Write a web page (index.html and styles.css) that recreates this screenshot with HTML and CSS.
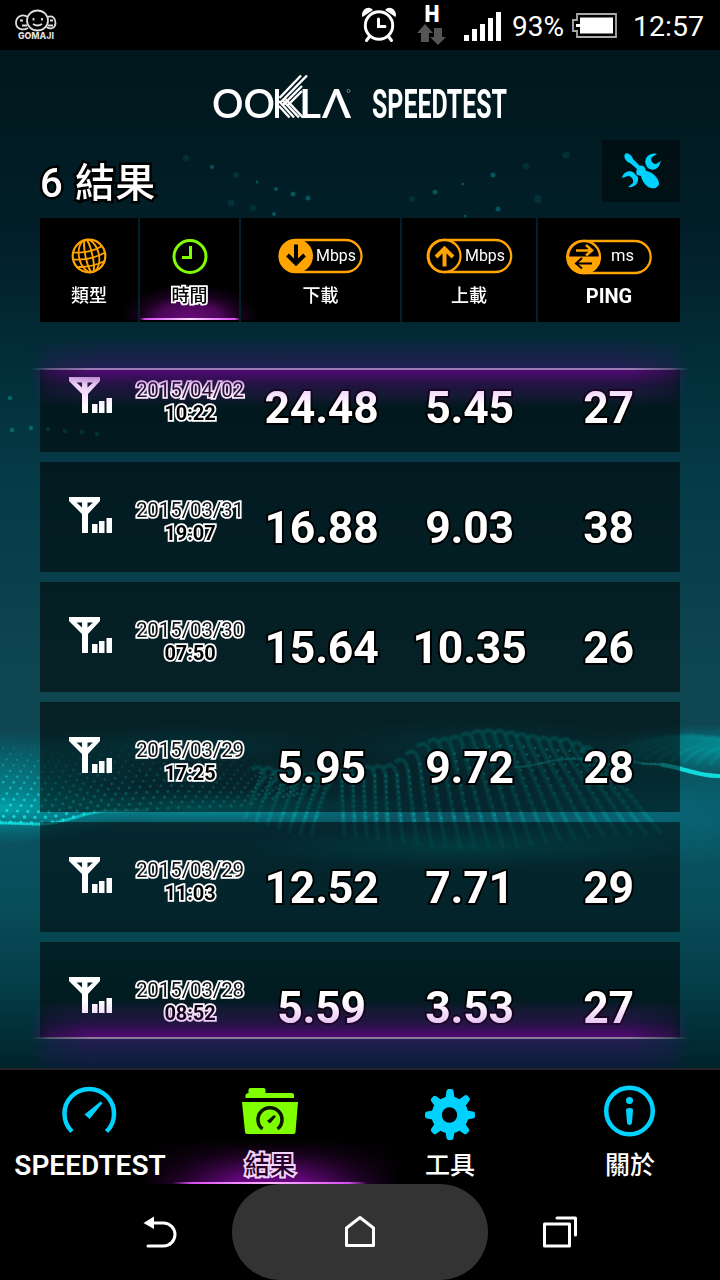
FILE: index.html
```html
<!DOCTYPE html>
<html lang="zh-Hant">
<head>
    <meta charset="UTF-8">
    <meta name="viewport" content="width=device-width, initial-scale=1.0">
    <title>Speedtest - 結果</title>
    <link rel="stylesheet" href="styles.css">
</head>
<body>
    <!-- Shared icons -->
    <svg class="symbols">
        <symbol id="antenna-icon" viewBox="0 0 43 36">
            <path fill-rule="evenodd" d="M0 0H31V4L19 17V36H13V17L0 4ZM7.500 5.500L13 10.500V5.500ZM18.500 5.500V10.500L24 5.500Z"/>
            <path d="M23 27h5.500v9H23zM30 24h5.500v12H30zM37.500 21h5.500v15h-5.500z"/>
        </symbol>
    </svg>

    <!-- Status bar -->
    <div class="status-bar">
        <svg class="gomaji" width="44" height="32" viewBox="0 0 44 32">
            <g fill="none" stroke="#ddd" stroke-width="1.8">
                <path d="M14 8C8 4 2 8 2 14c0 6 7 8 12 5M6 11.500h3M8 16.500h5"/>
                <path d="M33.500 8c5-2 8 1 8 6s-5 7-9 4M36 11.500h3M34 16.500h5"/>
                <ellipse cx="23.5" cy="11.5" rx="10.5" ry="10"/>
                <path d="M19.500 9v2.500M28 9v2.500M19 15c3 2 6 2 9 0"/>
            </g>
            <text x="4" y="30" textLength="36" lengthAdjust="spacingAndGlyphs">GOMAJI</text>
        </svg>
        <svg class="alarm" width="36" height="36" viewBox="0 0 36 36">
            <circle cx="18" cy="18.500" r="13.700" fill="none" stroke="#fff" stroke-width="3"/>
            <path d="M17.500 12v7.500h6.500M8.500 29.500l-3 4M27.500 29.500l3 4" fill="none" stroke="#fff" stroke-width="3" stroke-linecap="round"/>
            <path d="M1.500 10C-1 4 7-3 12 3ZM34.500 10C37 4 29-3 24 3Z" fill="#fff"/>
        </svg>
        <svg class="data" width="30" height="42" viewBox="0 0 30 42">
            <text x="7.500" y="17" textLength="15" lengthAdjust="spacingAndGlyphs">H</text>
            <path d="M8 19l8 9h-4v9H4v-9H0ZM17 23h8v9h4l-8 8-8-8h4Z" fill="#555"/>
        </svg>
        <svg class="bars" width="38" height="30" viewBox="0 0 38 30" fill="#fff">
            <path d="M0 23h5v6H0zM8 17h5v12H8zM16 12h5v17h-5zM24 6h5v23h-5zM32 0h5v29h-5z"/>
        </svg>
        <span class="battery-level">93%</span>
        <svg class="battery" width="45" height="25" viewBox="0 0 45 25">
            <path d="M5 1H44V24H5V18H1V7H5Z" fill="none" stroke="#aaa" stroke-width="1.800"/>
            <path d="M8 4.500H41V20.500H8V14H4V11H8Z" fill="#fff"/>
        </svg>
        <span class="time">12:57</span>
    </div>

    <main class="app">
        <canvas class="wave" id="wave" width="720" height="1018"></canvas>

        <!-- Logo -->
        <header class="brand">
            <svg width="295" height="48" viewBox="0 0 295 48">
                <text class="ookla" x="-1" y="43.500" textLength="63" lengthAdjust="spacingAndGlyphs">OO</text>
                <text class="ookla" x="86" y="43.500" textLength="22" lengthAdjust="spacingAndGlyphs">L</text>
                <text class="ookla" x="109" y="43.500" textLength="29" lengthAdjust="spacingAndGlyphs">Λ</text>
                <path d="M64 15v29" stroke="#fff" stroke-width="4"/>
                <g fill="none" stroke="#fff" stroke-width="2.400">
                    <path d="M66.500 24L88 1.500M67 29L94 1.500M70 31L89 12M74 32L89 17"/>
                    <path d="M66 27l15 16.500M69.500 26l16.500 17.500M66 32l10.500 11.500M72.500 25l17.500 18.500"/>
                </g>
                <circle cx="135.500" cy="17" r="1.500" fill="none" stroke="#688" stroke-width="1"/>
                <text class="product" x="159" y="44" textLength="135" lengthAdjust="spacingAndGlyphs">SPEEDTEST</text>
            </svg>
        </header>

        <!-- Title -->
        <div class="title-row">
            <h1>6 結果</h1>
            <div class="tool-button">
                <svg width="40" height="36" viewBox="0 0 40 36" fill="#00d2ff">
                    <path d="M3 1c2-2 7 1 8 5l7 7c2-1 4 0 5 2l1 3c4 0 12 5 13 12 0 4-4 6-8 5-5-1-9-7-10-12l-4-1c-1-2-1-4 0-6L8 10C4 9 1 4 3 1Z"/>
                    <path d="M35 1c-7-2-14 4-11 11 2 6 10 6 13 1l2-5-5 3c-4 0-6-4-4-7Z"/>
                    <path d="M0 25c1-5 6-8 11-6l5 5c1 6-3 11-10 10l5-4c1-4-2-7-5-7Z"/>
                </svg>
            </div>
        </div>

        <!-- Sort columns -->
        <div class="columns">
            <div class="column">
                <svg width="36" height="36" viewBox="0 0 36 36" fill="none" stroke="#ffa400" stroke-width="1.800">
                    <circle cx="18" cy="18" r="16.300" stroke-width="2.200"/>
                    <g transform="rotate(-12 18 18)">
                        <ellipse cx="18" cy="18" rx="10" ry="16.500"/>
                        <ellipse cx="18" cy="18" rx="3.500" ry="16.500"/>
                        <path d="M3 11q15 5 30 0M1.500 18q16.500 5 33 0M3 26q15 4 30 0"/>
                    </g>
                </svg>
                <span>類型</span>
            </div>
            <div class="column active">
                <svg width="36" height="36" viewBox="0 0 36 36" fill="none" stroke="#7fff00">
                    <circle cx="18" cy="18.500" r="16" stroke-width="3"/>
                    <path d="M18.500 8v11.500H10" stroke-width="3"/>
                </svg>
                <span>時間</span>
            </div>
            <div class="column">
                <svg width="86" height="36" viewBox="0 0 86 36">
                    <rect x="1.500" y="2" width="82" height="32" rx="16" fill="none" stroke="#ffa400" stroke-width="2.300"/>
                    <circle cx="18" cy="18" r="17" fill="#ffa400"/>
                    <path d="M18 6.500v19M9.500 17l8.500 8.500 8.500-8.500" fill="none" stroke="#000" stroke-width="4"/>
                    <text x="38" y="23" textLength="40" lengthAdjust="spacingAndGlyphs">Mbps</text>
                </svg>
                <span>下載</span>
            </div>
            <div class="column">
                <svg width="86" height="36" viewBox="0 0 86 36">
                    <rect x="1.700" y="2" width="83.500" height="32" rx="16" fill="none" stroke="#ffa400" stroke-width="2.300"/>
                    <circle cx="18.500" cy="18" r="16" fill="#000" stroke="#ffa400" stroke-width="2.300"/>
                    <path d="M18.500 28.500V10.500M10 19l8.500-8.500 8.500 8.500" fill="none" stroke="#ffa400" stroke-width="4"/>
                    <text x="39" y="23" textLength="40" lengthAdjust="spacingAndGlyphs">Mbps</text>
                </svg>
                <span>上載</span>
            </div>
            <div class="column">
                <svg width="86" height="36" viewBox="0 0 86 36">
                    <rect x="1.200" y="3" width="83.500" height="32" rx="16" fill="none" stroke="#ffa400" stroke-width="2.300"/>
                    <circle cx="18" cy="19" r="16" fill="#000" stroke="#ffa400" stroke-width="2.300"/>
                    <path d="M2 18.500h32a16 16 0 0 1-32 0Z" fill="#ffa400"/>
                    <path d="M10 12.500h16M20 7l6 5.500-6 5" fill="none" stroke="#ffa400" stroke-width="2.500"/>
                    <path d="M26 25.500H10M16 20L10 25.500l6 5" fill="none" stroke="#000" stroke-width="2"/>
                    <text x="45" y="23" textLength="23" lengthAdjust="spacingAndGlyphs">ms</text>
                </svg>
                <span class="ping">PING</span>
            </div>
            <div class="sort-glow"></div>
        </div>

        <!-- Results -->
        <div class="results">
            <div class="list">
                <div class="row">
                    <svg class="antenna"><use href="#antenna-icon"/></svg>
                    <div class="date">2015/04/02<b>10:22</b></div>
                    <div class="value">24.48</div>
                    <div class="value">5.45</div>
                    <div class="value">27</div>
                </div>
                <div class="row">
                    <svg class="antenna"><use href="#antenna-icon"/></svg>
                    <div class="date">2015/03/31<b>19:07</b></div>
                    <div class="value">16.88</div>
                    <div class="value">9.03</div>
                    <div class="value">38</div>
                </div>
                <div class="row">
                    <svg class="antenna"><use href="#antenna-icon"/></svg>
                    <div class="date">2015/03/30<b>07:50</b></div>
                    <div class="value">15.64</div>
                    <div class="value">10.35</div>
                    <div class="value">26</div>
                </div>
                <div class="row">
                    <svg class="antenna"><use href="#antenna-icon"/></svg>
                    <div class="date">2015/03/29<b>17:25</b></div>
                    <div class="value">5.95</div>
                    <div class="value">9.72</div>
                    <div class="value">28</div>
                </div>
                <div class="row">
                    <svg class="antenna"><use href="#antenna-icon"/></svg>
                    <div class="date">2015/03/29<b>11:03</b></div>
                    <div class="value">12.52</div>
                    <div class="value">7.71</div>
                    <div class="value">29</div>
                </div>
                <div class="row">
                    <svg class="antenna"><use href="#antenna-icon"/></svg>
                    <div class="date">2015/03/28<b>08:52</b></div>
                    <div class="value">5.59</div>
                    <div class="value">3.53</div>
                    <div class="value">27</div>
                </div>
            </div>
            <div class="edge edge-top"></div>
            <div class="edge edge-bottom"></div>
        </div>
    </main>

    <!-- Tabs -->
    <nav class="tabs">
        <div class="tab">
            <svg width="60" height="56" viewBox="0 0 60 56">
                <path d="M12 45.500A24.800 24.800 0 1 1 46.500 45.500" fill="none" stroke="#00d2ff" stroke-width="4.500"/>
                <path d="M40.500 15.500L42.500 17 29.500 33 24.500 28.500Z" fill="#00d2ff"/>
            </svg>
            <span>SPEEDTEST</span>
        </div>
        <div class="tab active">
            <svg width="60" height="56" viewBox="0 0 60 56">
                <path d="M5.500 12V9q0-1.500 3-2V4q0-2 2-2h13q2 0 2 2v3h26q2.500 0 2.500 2v3ZM2 16h56l-2.500 30q0 2-2 2H7q-2 0-2-2Z" fill="#7fff00"/>
                <path d="M22.500 43A12 12 0 1 1 37.500 43" fill="none" stroke="#0a1400" stroke-width="3.500"/>
                <path d="M34 29l2 1.500-6 7-3-2.500Z" fill="#0a1400"/>
            </svg>
            <span>結果</span>
        </div>
        <div class="tab">
            <svg width="60" height="56" viewBox="0 0 60 56">
                <g fill="#00d2ff">
                    <circle cx="30" cy="29" r="18.500"/>
                    <g id="teeth">
                        <path d="M25 15l1.500-10q.5-2 2-2h3q1.500 0 2 2l1.500 10zM25 43l1.500 9q.5 2 2 2h3q1.500 0 2-2l1.500-9z"/>
                        <path d="M16 24l-9 1.500q-2 .5-2 2v3q0 1.500 2 2l9 1.500zM44 24l9 1.500q2 .5 2 2v3q0 1.500-2 2l-9 1.500z"/>
                    </g>
                    <use href="#teeth" transform="rotate(45 30 29)"/>
                </g>
                <circle cx="29.500" cy="29" r="7.700" fill="#000"/>
            </svg>
            <span>工具</span>
        </div>
        <div class="tab">
            <svg width="60" height="56" viewBox="0 0 60 56">
                <circle cx="29.500" cy="25" r="23.300" fill="none" stroke="#00d2ff" stroke-width="4.500"/>
                <circle cx="29.500" cy="14.500" r="3.500" fill="#00d2ff"/>
                <path d="M26 24q0-2 3.500-2t3.500 2l-1 13q-.5 2-2.500 2t-2.500-2Z" fill="#00d2ff"/>
            </svg>
            <span>關於</span>
        </div>
        <div class="tab-glow"></div>
    </nav>

    <!-- System navigation -->
    <div class="system-bar">
        <div class="key">
            <svg width="36" height="34" viewBox="0 0 36 34">
                <path d="M9 8h12.500a11.500 11.500 0 0 1 0 23H6" fill="none" stroke="#fff" stroke-width="3" stroke-linecap="round"/>
                <path d="M1.500 8l10.500-6.500v12.500Z" fill="#fff"/>
            </svg>
        </div>
        <div class="key home">
            <svg width="36" height="34" viewBox="0 0 36 34">
                <path d="M4.500 30.500V13L18 2.500 31.500 13V30.500Z" fill="none" stroke="#fff" stroke-width="3" stroke-linejoin="round"/>
            </svg>
        </div>
        <div class="key">
            <svg width="36" height="34" viewBox="0 0 36 34" fill="none" stroke="#fff" stroke-width="3" stroke-linejoin="round" stroke-linecap="round">
                <path d="M2.500 9h25v22h-25ZM15 3h18.500v17"/>
            </svg>
        </div>
    </div>

    <script src="script.js"></script>
</body>
</html>
```

FILE: styles.css
```css
* {
    box-sizing: border-box;
}
body {
    margin: 0;
    width: 720px;
    height: 1280px;
    overflow: hidden;
    background: #000;
    color: #fff;
    font-family: Roboto, "Noto Sans CJK TC", sans-serif;
}
svg {
    display: block;
    flex-shrink: 0;
}
.symbols {
    display: none;
}

/* Status bar */
.status-bar {
    height: 50px;
    display: flex;
    align-items: flex-start;
    padding-left: 14px;
}
.gomaji {
    margin-top: 9px;
}
.gomaji text {
    font: 800 9px Inter, sans-serif;
    fill: #ddd;
}
.alarm {
    margin: 7px 0 0 303px;
}
.data {
    margin: 5px 0 0 20px;
}
.data text {
    font: 900 24px Roboto, sans-serif;
    fill: #fff;
}
.bars {
    margin: 12px 0 0 17px;
}
.battery-level, .time {
    font-size: 28.500px;
    line-height: 34px;
    margin-top: 10px;
    white-space: nowrap;
}
.battery-level {
    width: 60px;
    margin-left: 10px;
    font-size: 28px;
}
.battery {
    margin-top: 13px;
}
.time {
    margin-left: 16px;
}

/* App area */
.app {
    position: relative;
    height: 1018px;
    padding: 0 40px;
    background: linear-gradient(#00171c, #02202a 20%, #02303a 32%, #053a47 42%, #0d4551 60%, #0e4651 66%, #0c5261 76%, #084d5a 84%, #043d48 92%, #00242a);
}
.wave {
    position: absolute;
    left: 0;
    top: 0;
}
.brand, .title-row, .columns, .results {
    position: relative;
}
.brand {
    height: 90px;
    padding: 24px 0 0 173px;
}
.brand svg {
    overflow: visible;
}
.ookla {
    font: 600 40px Lato, "Noto Sans", sans-serif;
    fill: #fff;
}
.product {
    font: 700 41px Roboto, sans-serif;
    fill: #fff;
}
.title-row {
    height: 78px;
    display: flex;
    justify-content: space-between;
}
h1 {
    margin: 13px 0 0;
    font-size: 40px;
    line-height: 62px;
    font-weight: 500;
    letter-spacing: 0.200px;
    word-spacing: 2px;
    -webkit-text-stroke: 5px #000;
    paint-order: stroke fill;
}
.tool-button {
    width: 78px;
    height: 62px;
    padding: 13px 0 0 20px;
    background: rgba(0, 8, 12, 0.6);
}
.tool-button svg, .column svg, .tab svg {
    overflow: visible;
}

/* Column headings */
.columns {
    height: 104px;
    display: grid;
    grid-template-columns: 100px 101px 161px 136px 142px;
    background: #000;
}
.column {
    position: relative;
    z-index: 1;
    display: flex;
    flex-direction: column;
    align-items: center;
    padding-top: 20px;
    border-right: 2px solid #02202b;
    font-size: 18px;
    line-height: 24px;
    font-weight: 500;
}
.column:nth-child(5) {
    border-right: 0;
}
.column span {
    margin-top: 10px;
}
.column text {
    font: 17px Roboto, sans-serif;
    fill: #fff;
}
.column.active span, .tab.active span {
    color: #080808;
    -webkit-text-stroke: 3.500px #fff;
    paint-order: stroke fill;
}
.column .ping {
    font-size: 20px;
    font-weight: 700;
}
.sort-glow {
    position: absolute;
    left: 80px;
    bottom: 2px;
    width: 140px;
    height: 36px;
    background: linear-gradient(90deg, transparent 14%, #d84cf0 18%, #ffd8ff 50%, #d84cf0 82%, transparent 86%) bottom / 100% 2px no-repeat,
        radial-gradient(ellipse 50% 100% at 50% 100%, #6c0a7c, #4c0758 45%, rgba(50, 4, 60, 0.5) 70%, transparent);
}

/* Results list */
.results {
    height: 670px;
    margin-top: 47px;
}
.list {
    height: 669px;
    overflow: hidden;
    display: flex;
    flex-direction: column;
    gap: 10px;
}
.row {
    flex: 0 0 110px;
    display: grid;
    grid-template-columns: 95px 110px 153px 143px 135px;
    background: rgba(0, 0, 0, 0.52);
}
.row:first-child {
    margin-top: -27px;
}
.antenna {
    width: 43px;
    height: 36px;
    margin: 35px 0 0 29px;
    fill: #fff;
}
.date {
    padding-top: 37px;
    text-align: center;
    font-size: 20.500px;
    line-height: 23px;
    letter-spacing: -0.100px;
    color: #111;
    -webkit-text-stroke: 3.500px #fff;
    paint-order: stroke fill;
}
.date b {
    display: block;
    font-size: 20px;
    font-weight: 700;
    color: #000;
}
.value {
    padding-top: 39px;
    text-align: center;
    font-size: 44.500px;
    line-height: 54px;
    font-weight: 700;
    letter-spacing: -0.200px;
    -webkit-text-stroke: 4px #000;
    paint-order: stroke fill;
}

/* Neon edges of the scroll area */
.edge {
    position: absolute;
    left: -10px;
    right: -10px;
    height: 70px;
    -webkit-mask: linear-gradient(90deg, transparent, rgba(0, 0, 0, 0.6) 20px, #000 60px, #000 600px, rgba(0, 0, 0, 0.6) 640px, transparent);
    mask: linear-gradient(90deg, transparent, rgba(0, 0, 0, 0.6) 20px, #000 60px, #000 600px, rgba(0, 0, 0, 0.6) 640px, transparent);
}
.edge-top {
    top: -32px;
    background: linear-gradient(transparent, rgba(58, 20, 100, 0.6) 31px, #9a7cb4 31px, #9a7cb4 33px, rgba(115, 5, 150, 0.7) 33px, rgba(150, 10, 200, 0.22) 48px, rgba(190, 30, 240, 0.1) 60px, transparent);
}
.edge-bottom {
    bottom: -31px;
    background: linear-gradient(0deg, rgba(20, 20, 80, 0.4), rgba(58, 20, 100, 0.6) 31px, #8a7c98 31px, #8a7c98 33px, rgba(115, 5, 150, 0.7) 33px, rgba(150, 10, 200, 0.22) 48px, rgba(190, 30, 240, 0.1) 60px, transparent);
}

/* Tabs */
.tabs {
    position: relative;
    height: 116px;
    display: grid;
    grid-template-columns: repeat(4, 180px);
    border-top: 2px solid #25232c;
    background: #000;
}
.tab {
    position: relative;
    z-index: 1;
    display: flex;
    flex-direction: column;
    align-items: center;
    padding-top: 16px;
    font-size: 25px;
    line-height: 36px;
    font-weight: 500;
}
.tab:first-child span {
    font-size: 28px;
    font-weight: 600;
}
.tab span {
    margin-top: 6px;
}
.tab.active span {
    color: #28002e;
    -webkit-text-stroke: 4px #f5d4fa;
}
.tab-glow {
    position: absolute;
    left: 140px;
    bottom: 0;
    width: 260px;
    height: 44px;
    background: linear-gradient(transparent, rgba(60, 5, 70, 0.45) 35%, #70088a);
    -webkit-mask: linear-gradient(90deg, transparent, rgba(0, 0, 0, 0.35) 17%, #000 38%, #000 62%, rgba(0, 0, 0, 0.35) 83%, transparent);
    mask: linear-gradient(90deg, transparent, rgba(0, 0, 0, 0.35) 17%, #000 38%, #000 62%, rgba(0, 0, 0, 0.35) 83%, transparent);
}
.tabs::after {
    content: "";
    position: absolute;
    left: 172px;
    bottom: 0;
    width: 196px;
    height: 2px;
    background: linear-gradient(90deg, transparent, #d84cf0 10%, #ffb8ff 50%, #d84cf0 90%, transparent);
}

/* System navigation */
.system-bar {
    height: 96px;
    display: flex;
    justify-content: center;
    gap: 36px;
}
.key {
    width: 72px;
    display: flex;
    justify-content: center;
    padding-top: 31px;
}
.key.home {
    width: 256px;
    border-radius: 48px;
    background: #333;
}
```

FILE: script.js
```javascript
const canvas = document.getElementById("wave");
const ctx = canvas.getContext("2d");

// The canvas starts below the 50px status bar
ctx.translate(0, -50);

const dot = (x, y, r, alpha) => {
    ctx.fillStyle = `rgba(20, 225, 225, ${alpha})`;
    ctx.beginPath();
    ctx.arc(x, y, r, 0, Math.PI * 2);
    ctx.fill();
};

// Smooth height between [x, y] points
const curve = (points, x) => {
    for (let i = 1; i < points.length; i++) {
        if (x <= points[i][0]) {
            const [x0, y0] = points[i - 1];
            const [x1, y1] = points[i];
            const t = (x - x0) / (x1 - x0);
            return y0 + (y1 - y0) * (1 - Math.cos(Math.PI * t)) / 2;
        }
    }
    return points[points.length - 1][1];
};

const haze = (x, y, rx, ry, color) => {
    ctx.save();
    ctx.translate(x, y);
    ctx.scale(rx, ry);
    const g = ctx.createRadialGradient(0, 0, 0, 0, 0, 1);
    g.addColorStop(0, color);
    g.addColorStop(1, "rgba(0, 150, 160, 0)");
    ctx.fillStyle = g;
    ctx.fillRect(-1, -1, 2, 2);
    ctx.restore();
};

haze(0, 808, 140, 36, "rgba(0, 195, 200, 0.75)");
haze(0, 775, 190, 45, "rgba(0, 165, 170, 0.45)");
haze(200, 808, 240, 20, "rgba(0, 200, 205, 0.6)");
haze(460, 847, 230, 22, "rgba(0, 160, 160, 0.55)");
haze(720, 750, 150, 26, "rgba(0, 180, 185, 0.6)");
haze(660, 810, 200, 60, "rgba(0, 140, 160, 0.35)");
haze(180, 745, 150, 20, "rgba(0, 150, 155, 0.35)");
haze(480, 745, 150, 28, "rgba(0, 150, 155, 0.35)");

// Left sheet
const leftTop = [[0, 748], [60, 750], [160, 735], [240, 748], [300, 775]];
const leftBottom = [[0, 822], [40, 823], [110, 810], [230, 806], [300, 795]];
for (let c = -6; c < 29; c++) {
    for (let j = 0; j < 14; j++) {
        const t = j / 13;
        const x = c * 10.5 + (1 - t) * 45;
        if (x < 0 || x > 300) continue;
        const y = curve(leftTop, x) * (1 - t) + curve(leftBottom, x) * t;
        dot(x, y, 1 + t * 0.7, (0.18 + t * 0.8) * (1 - x / 560));
    }
}
for (let x = 0; x < 150; x += 3) {
    dot(x, curve(leftBottom, x) + 1, 1.7, 0.95 - x / 250);
}

// Middle ribs
const ribTop = [[260, 765], [310, 772], [345, 765], [385, 764], [440, 737], [490, 728], [560, 736], [610, 750]];
const ribBottom = [[250, 812], [350, 836], [470, 850], [600, 835], [680, 815]];
for (let x = 260; x < 600; x += 11) {
    const y0 = curve(ribTop, x);
    const y1 = curve(ribBottom, x + 25);
    const bend = x < 330 ? -15 : 8 + Math.max(0, x - 380) * 0.3;
    const fade = ctx.createLinearGradient(0, y0, 0, y1);
    fade.addColorStop(0, "rgba(0, 190, 190, 0.32)");
    fade.addColorStop(1, "rgba(0, 180, 185, 0.14)");
    ctx.strokeStyle = fade;
    [5, 2].forEach((width) => {
        ctx.lineWidth = width;
        ctx.beginPath();
        ctx.moveTo(x - 8, y0 + 5);
        ctx.quadraticCurveTo(x + 1, y0 - 3, x + 5, y0 + 12);
        ctx.quadraticCurveTo(x + bend / 2, (y0 + y1) / 2, x + bend, y1);
        ctx.stroke();
    });
    for (let t = 0.15; t < 0.75; t += 0.07) {
        dot(x + 4 + (bend - 4) * t, y0 + (y1 - y0) * t, 1.4, 0.75 * (1 - t));
    }
}

// Right crest, brightest at the screen edge
const crest = [[515, 767], [570, 759], [610, 757], [650, 764], [720, 776]];
for (let x = 515; x <= 720; x += 2.5) {
    const a = x > 640 ? 0.9 : 0.5;
    dot(x, curve(crest, x), x > 660 ? 2.3 : 1.3, a);
}
ctx.lineWidth = 4;
ctx.strokeStyle = "rgba(0, 210, 215, 0.12)";
for (let i = 0; i < 9; i++) {
    ctx.beginPath();
    ctx.moveTo(605 + i * 13, 757 + i);
    ctx.quadraticCurveTo(635 + i * 12, 737, 695 + i * 10, 735 + i);
    ctx.stroke();
}

// Distant particles at the top
[[212, 167, 2], [236, 175, 3], [257, 182, 1.5], [276, 189, 2], [293, 194, 2.5], [231, 203, 3.5],
 [253, 208, 3], [274, 214, 2], [308, 198, 2.5], [186, 158, 3], [435, 192, 2.5], [463, 184, 1.5], [493, 175, 2.5],
 [526, 166, 3], [566, 155, 3.5], [498, 209, 2.5], [465, 216, 1.5], [538, 199, 4], [412, 199, 3]
].forEach(([x, y, r]) => dot(x, y, r, r > 2.5 ? 0.1 : 0.28));
[[10, 398], [31, 428], [48, 429], [65, 431], [82, 432], [97, 434], [12, 430]].forEach(([x, y]) => dot(x, y, 2.2, 0.3));
```
